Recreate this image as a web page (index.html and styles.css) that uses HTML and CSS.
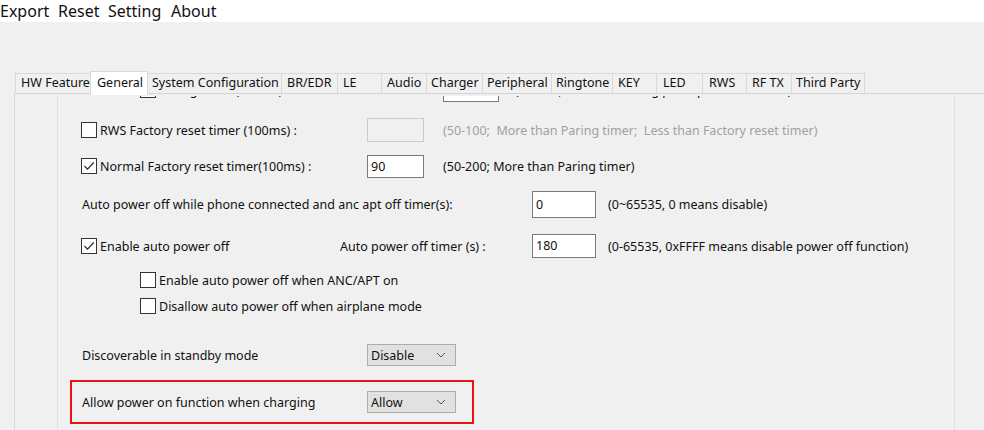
FILE: index.html
```html
<!DOCTYPE html>
<html>
<head>
<meta charset="utf-8">
<link rel="stylesheet" href="styles.css">
</head>
<body>
<div class="menubar">
  <span class="menu m-export">Export</span>
  <span class="menu m-reset">Reset</span>
  <span class="menu m-setting">Setting</span>
  <span class="menu m-about">About</span>
</div>
<div class="workarea">
  <div class="tabs">
    <div class="tab t1">HW Feature</div>
    <div class="tab t2 active">General</div>
    <div class="tab t3">System Configuration</div>
    <div class="tab t4">BR/EDR</div>
    <div class="tab t5">LE</div>
    <div class="tab t6">Audio</div>
    <div class="tab t7">Charger</div>
    <div class="tab t8">Peripheral</div>
    <div class="tab t9">Ringtone</div>
    <div class="tab t10">KEY</div>
    <div class="tab t11">LED</div>
    <div class="tab t12">RWS</div>
    <div class="tab t13">RF TX</div>
    <div class="tab t14">Third Party</div>
  </div>
  <div class="panel">
    <div class="viewport">
      <div class="content">
        <div class="row r0 sub">
          <div class="cell c-sublabel"><span class="cb"></span><span>Paring timer (100ms) :</span></div>
          <div class="cell c-in2"><span class="input w56"></span></div>
          <div class="hint">(10-100; More than Long press power on timer)</div>
        </div>
        <div class="row r1">
          <div class="cell c-cblabel"><span class="cb"></span><span>RWS Factory reset timer (100ms) :</span></div>
          <div class="cell c-in"><span class="input w57 disabled"></span></div>
          <div class="hint disabled-text">(50-100;&nbsp; More than Paring timer;&nbsp; Less than Factory reset timer)</div>
        </div>
        <div class="row r2">
          <div class="cell c-cblabel"><span class="cb checked"><svg viewBox="0 0 14 14" width="14" height="14"><path d="M2.5 7 L5.5 10.2 L11.8 3.5" fill="none" stroke="#222" stroke-width="1.1"/></svg></span><span>Normal Factory reset timer(100ms) :</span></div>
          <div class="cell c-in"><span class="input w57 h23">90</span></div>
          <div class="hint">(50-200; More than Paring timer)</div>
        </div>
        <div class="row r3 nocb">
          <div class="cell c-longlabel">Auto power off while phone connected and anc apt off timer(s):</div>
          <div class="cell c-in"><span class="input w64 h27">0</span></div>
          <div class="hint">(0~65535, 0 means disable)</div>
        </div>
        <div class="row r4">
          <div class="cell c-cbshort"><span class="cb checked"><svg viewBox="0 0 14 14" width="14" height="14"><path d="M2.5 7 L5.5 10.2 L11.8 3.5" fill="none" stroke="#222" stroke-width="1.1"/></svg></span><span>Enable auto power off</span></div>
          <div class="cell c-label2">Auto power off timer (s) :</div>
          <div class="cell c-in"><span class="input w64">180</span></div>
          <div class="hint">(0-65535, 0xFFFF means disable power off function)</div>
        </div>
        <div class="row r5 sub">
          <div class="cell"><span class="cb"></span><span>Enable auto power off when ANC/APT on</span></div>
        </div>
        <div class="row r6 sub">
          <div class="cell"><span class="cb"></span><span>Disallow auto power off when airplane mode</span></div>
        </div>
        <div class="row r7 nocb">
          <div class="cell c-sellabel">Discoverable in standby mode</div>
          <div class="select"><span>Disable</span><svg class="chev" viewBox="0 0 10 6" width="10" height="6"><path d="M1 1 L5 5 L9 1" fill="none" stroke="#555" stroke-width="1"/></svg></div>
        </div>
        <div class="redbox">
          <div class="row r8">
            <div class="cell c-sellabel">Allow power on function when charging</div>
            <div class="select"><span>Allow</span><svg class="chev" viewBox="0 0 10 6" width="10" height="6"><path d="M1 1 L5 5 L9 1" fill="none" stroke="#555" stroke-width="1"/></svg></div>
          </div>
        </div>
      </div>
    </div>
  </div>
</div>
</body>
</html>
```
FILE: styles.css
```css
* { box-sizing: border-box; }
html, body {
  margin: 0;
  padding: 0;
  width: 984px;
  height: 430px;
  overflow: hidden;
  background: #f0f0f0;
  font-family: "Noto Sans", "Open Sans", sans-serif;
  font-size: 12.5px;
  color: #111;
}
.menubar {
  height: 22px;
  background: #ffffff;
  display: flex;
  align-items: center;
  font-size: 16px;
  color: #111;
}
.menu { display: block; }
.m-export { width: 58px; padding-left: 0; }
.m-reset { width: 50px; }
.m-setting { width: 63px; }
.m-about { width: 50px; }

.workarea { padding-top: 49px; }
.tabs {
  display: flex;
  align-items: flex-end;
  height: 22px;
  margin-left: 15px;
}
.tab {
  height: 20px;
  border-top: 1px solid #d9d9d9;
  border-right: 1px solid #d9d9d9;
  background: #f0f0f0;
  padding-left: 5px;
  line-height: 18px;
  white-space: nowrap;
  flex: none;
}
.t1 { width: 76px; border-left: 1px solid #d9d9d9; }
.t2 { width: 57px; }
.t3 { width: 134px; padding-left: 4px; }
.t4 { width: 56px; }
.t5 { width: 44px; }
.t6 { width: 45px; }
.t7 { width: 56px; padding-left: 4px; }
.t8 { width: 69px; padding-left: 4px; }
.t9 { width: 61px; padding-left: 4px; }
.t10 { width: 44px; }
.t11 { width: 46px; padding-left: 6px; }
.t12 { width: 44px; padding-left: 6px; }
.t13 { width: 45px; padding-left: 5px; }
.t14 { width: 73px; padding-left: 4px; }
.tab.active {
  height: 24px;
  margin-bottom: -2px;
  background: #ffffff;
  border-left: 1px solid #d9d9d9;
  margin-left: -1px;
  width: 58px;
  padding-left: 6px;
  line-height: 21px;
  position: relative;
  z-index: 1;
}

.panel {
  margin-left: 14px;
  border-top: 1px solid #d4d4d4;
  border-left: 1px solid #d9d9d9;
  padding-top: 2px;
  padding-left: 42px;
  height: 340px;
}
.viewport {
  width: 898px;
  height: 340px;
  border-left: 1px solid #dedede;
  border-right: 1px solid #dedede;
  overflow: hidden;
}
.content {
  margin-top: -19px;
  display: flex;
  flex-direction: column;
}
.row {
  display: flex;
  align-items: center;
  height: 26px;
  padding-left: 23px;
  white-space: nowrap;
}
.row.nocb { padding-left: 24px; }
.row.sub { padding-left: 82px; }
.cell { display: flex; align-items: center; flex: none; }
.c-cblabel { width: 286px; }
.c-sublabel { width: 303px; }
.c-in { width: 76px; }
.c-in2 { width: 72px; }
.c-longlabel { width: 450px; }
.c-cbshort { width: 259px; }
.c-label2 { width: 192px; }
.c-sellabel { width: 285px; }

.r1 { margin-top: 14px; }
.r2 { margin-top: 10px; }
.r3 { margin-top: 12px; }
.r4 { margin-top: 16px; }
.r5 { margin-top: 8px; }
.r6 { margin-top: 0; }
.r7 { margin-top: 23px; }

.cb {
  width: 16px;
  height: 16px;
  border: 1px solid #333;
  background: #fff;
  margin-right: 3px;
  display: flex;
  align-items: center;
  justify-content: center;
  flex: none;
}
.input {
  display: block;
  height: 24px;
  border: 1px solid #7a7a7a;
  background: #fff;
  padding-left: 3px;
  line-height: 22px;
}
.input.disabled { background: #f0f0f0; border-color: #cccccc; }
.w56 { width: 56px; }
.w57 { width: 57px; }
.w64 { width: 64px; }
.h23 { height: 23px; line-height: 21px; }
.h27 { height: 27px; line-height: 25px; }
.hint { flex: none; }
.disabled-text { color: #a0a0a0; }

.select {
  width: 89px;
  height: 22px;
  border: 1px solid #adadad;
  background: #e1e1e1;
  display: flex;
  align-items: center;
  justify-content: space-between;
  padding-left: 3px;
  padding-right: 9px;
}
.chev { display: block; }

.redbox {
  margin-top: 12px;
  margin-left: 12px;
  width: 404px;
  height: 44px;
  border: 2px solid #e8121b;
  display: flex;
  align-items: center;
}
.redbox .row { padding-left: 10px; height: 40px; }
```
